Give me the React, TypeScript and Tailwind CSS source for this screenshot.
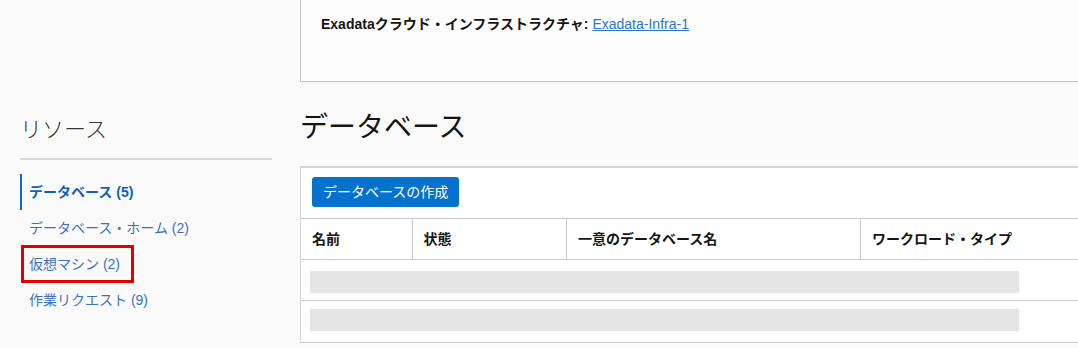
import React from "react";

const navItems = [
  { label: "データベース", count: 5, active: true },
  { label: "データベース・ホーム", count: 2 },
  { label: "仮想マシン", count: 2, highlight: true },
  { label: "作業リクエスト", count: 9 },
];

const columns = [
  { label: "名前", width: "w-[112px]" },
  { label: "状態", width: "w-[155px]" },
  { label: "一意のデータベース名", width: "w-[295px]" },
  { label: "ワークロード・タイプ", width: "w-[260px]" },
];

const font = {
  fontFamily: '"Liberation Sans", "Noto Sans CJK JP", sans-serif',
};

export default function App() {
  return (
    <div
      className="h-[348px] w-[1078px] overflow-hidden bg-[#fafafa] text-[#161513]"
      style={font}
    >
      <div className="flex">
        {/* sidebar */}
        <aside className="w-[300px] shrink-0 pl-5 pr-7 pt-[113px]">
          <h3 className="text-[22px] leading-[34px] font-light text-[#3a3631]">
            リソース
          </h3>
          <div className="mt-[11px] h-[2px] bg-[#d5d8dc]" />
          <ul className="mt-[14px]">
            {navItems.map((item) => (
              <li key={item.label} className="relative h-9">
                <a
                  className={
                    item.active
                      ? "flex h-9 items-center border-l-2 border-[#0b6ecf] pl-[7px] text-[14px] font-bold text-[#0b62b8]"
                      : "flex h-9 items-center pl-[9px] text-[14px] text-[#3a72bf]"
                  }
                >
                  {item.label} ({item.count})
                </a>
                {item.highlight && (
                  <span className="pointer-events-none absolute left-[1px] top-[-1px] h-[38px] w-[113px] border-[3px] border-[#e00000]" />
                )}
              </li>
            ))}
          </ul>
        </aside>

        {/* main */}
        <main className="w-[820px] shrink-0">
          <div className="h-[82px] border-b border-l border-[#c4c4c4] bg-[#fdfdfd] pl-5 pt-[15px]">
            <p className="text-[14px] leading-[18px]">
              <span className="font-bold">Exadataクラウド・インフラストラクチャ:</span>{" "}
              <a className="text-[#2a74c9] underline">Exadata-Infra-1</a>
            </p>
          </div>

          <h1 className="mt-[28px] text-[28px] leading-[36px] font-normal">
            データベース
          </h1>

          <div className="mt-[20px] border-l border-t-2 border-[#d2d5da] bg-white">
            <div className="flex h-[50px] items-start pl-[11px] pt-[9px]">
              <button className="h-[30px] rounded-[3px] bg-[#0572ce] px-[11px] text-[14px] text-white">
                データベースの作成
              </button>
            </div>
            <div className="flex h-[42px] border-y border-[#c8ccd2]">
              {columns.map((col, i) => (
                <div
                  key={col.label}
                  className={
                    i < columns.length - 1
                      ? `${col.width} flex items-center border-r border-[#c8ccd2] pl-[11px] text-[14px] font-bold`
                      : `${col.width} flex items-center pl-[11px] text-[14px] font-bold`
                  }
                >
                  {col.label}
                </div>
              ))}
            </div>
            {[0, 1].map((row) => (
              <div
                key={row}
                className={
                  row === 0
                    ? "flex h-[41px] items-start border-b border-[#c8ccd2] pl-[9px] pt-[11px]"
                    : "flex h-[42px] items-start border-b border-[#c8ccd2] pl-[9px] pt-[8px]"
                }
              >
                <div className="h-[22px] w-[709px] bg-[#e4e4e4]" />
              </div>
            ))}
          </div>
        </main>
      </div>
    </div>
  );
}
